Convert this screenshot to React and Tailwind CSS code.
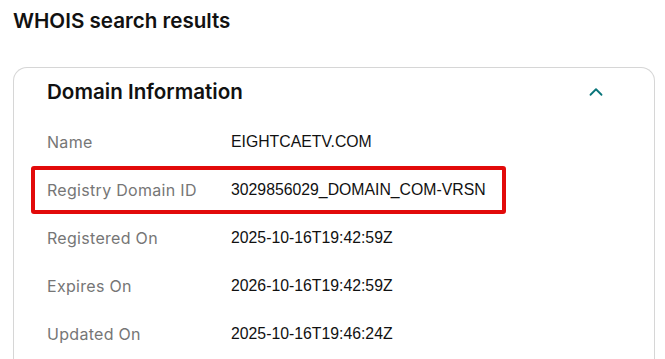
import { ChevronUp } from 'lucide-react';

const rows = [
  { label: 'Name', value: 'EIGHTCAETV.COM' },
  { label: 'Registry Domain ID', value: '3029856029_DOMAIN_COM-VRSN', highlight: true },
  { label: 'Registered On', value: '2025-10-16T19:42:59Z' },
  { label: 'Expires On', value: '2026-10-16T19:42:59Z' },
  { label: 'Updated On', value: '2025-10-16T19:46:24Z' },
];

export default function App() {
  return (
    <div className="min-h-screen bg-white px-[13px] pt-[7px] font-['Inter',sans-serif] text-[#111]">
      <h1 className="text-[20.6px] leading-[28px] font-semibold">WHOIS search results</h1>

      {/* Tarjeta */}
      <div className="mt-[32px] w-[642px] rounded-t-[14px] border border-b-0 border-[#d6d6d6] pb-10">
        <div className="flex h-[50px] items-center justify-between pb-[2px] pl-[33px] pr-[47px]">
          <h2 className="text-[20.6px] leading-[28px] font-semibold">Domain Information</h2>
          <ChevronUp className="h-[22px] w-[22px] text-[#09757a]" strokeWidth={2} />
        </div>

        <div className="pl-[17px]">
          {rows.map((row) => (
            <div
              key={row.label}
              className={
                row.highlight
                  ? 'flex h-12 w-[475px] items-center rounded-[3px] border-4 border-[#e20a0a] pl-3'
                  : 'flex h-12 items-center pl-4'
              }
            >
              <span className="w-[184px] text-[16px] tracking-[0.3px] text-[#767676]">{row.label}</span>
              <span className="font-['Liberation_Sans',sans-serif] text-[15.8px] text-[#111]">{row.value}</span>
            </div>
          ))}
        </div>
      </div>
    </div>
  );
}
